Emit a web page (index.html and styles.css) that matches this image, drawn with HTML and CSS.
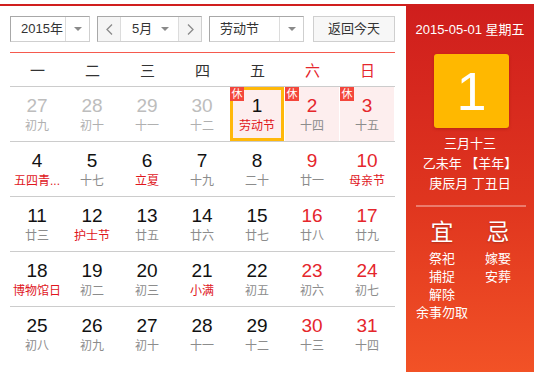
FILE: index.html
```html
<!DOCTYPE html>
<html lang="zh">
<head>
<meta charset="utf-8">
<link rel="stylesheet" href="styles.css">
</head>
<body>
<div class="wrap">
  <div class="cal">
    <div class="controls">
      <div class="sel sel-year"><span class="sel-text">2015年</span><span class="sel-arrow"><i class="tri"></i></span></div>
      <div class="month">
        <span class="nav"><svg width="7" height="11" viewBox="0 0 7 11"><polyline points="6,0.5 1,5.5 6,10.5" fill="none" stroke="#8a8a8a" stroke-width="1.3"/></svg></span>
        <span class="month-mid"><span class="sel-text">5月</span><i class="tri"></i></span>
        <span class="nav"><svg width="7" height="11" viewBox="0 0 7 11"><polyline points="1,0.5 6,5.5 1,10.5" fill="none" stroke="#8a8a8a" stroke-width="1.3"/></svg></span>
      </div>
      <div class="sel sel-hol"><span class="sel-text">劳动节</span><span class="sel-arrow"><i class="tri"></i></span></div>
      <div class="btn">返回今天</div>
    </div>
    <div class="head">
      <span>一</span><span>二</span><span>三</span><span>四</span><span>五</span><span class="we">六</span><span class="we">日</span>
    </div>
    <div class="row">
      <div class="cell other"><b>27</b><em>初九</em></div>
      <div class="cell other"><b>28</b><em>初十</em></div>
      <div class="cell other"><b>29</b><em>十一</em></div>
      <div class="cell other"><b>30</b><em>十二</em></div>
      <div class="cell rest today"><i class="badge">休</i><b>1</b><em class="fest">劳动节</em></div>
      <div class="cell rest wkend"><i class="badge">休</i><b>2</b><em>十四</em></div>
      <div class="cell rest wkend"><i class="badge">休</i><b>3</b><em>十五</em></div>
    </div>
    <div class="row">
      <div class="cell"><b>4</b><em class="fest">五四青...</em></div>
      <div class="cell"><b>5</b><em>十七</em></div>
      <div class="cell"><b>6</b><em class="fest">立夏</em></div>
      <div class="cell"><b>7</b><em>十九</em></div>
      <div class="cell"><b>8</b><em>二十</em></div>
      <div class="cell wkend"><b>9</b><em>廿一</em></div>
      <div class="cell wkend"><b>10</b><em class="fest">母亲节</em></div>
    </div>
    <div class="row">
      <div class="cell"><b>11</b><em>廿三</em></div>
      <div class="cell"><b>12</b><em class="fest">护士节</em></div>
      <div class="cell"><b>13</b><em>廿五</em></div>
      <div class="cell"><b>14</b><em>廿六</em></div>
      <div class="cell"><b>15</b><em>廿七</em></div>
      <div class="cell wkend"><b>16</b><em>廿八</em></div>
      <div class="cell wkend"><b>17</b><em>廿九</em></div>
    </div>
    <div class="row">
      <div class="cell"><b>18</b><em class="fest">博物馆日</em></div>
      <div class="cell"><b>19</b><em>初二</em></div>
      <div class="cell"><b>20</b><em>初三</em></div>
      <div class="cell"><b>21</b><em class="fest">小满</em></div>
      <div class="cell"><b>22</b><em>初五</em></div>
      <div class="cell wkend"><b>23</b><em>初六</em></div>
      <div class="cell wkend"><b>24</b><em>初七</em></div>
    </div>
    <div class="row last">
      <div class="cell"><b>25</b><em>初八</em></div>
      <div class="cell"><b>26</b><em>初九</em></div>
      <div class="cell"><b>27</b><em>初十</em></div>
      <div class="cell"><b>28</b><em>十一</em></div>
      <div class="cell"><b>29</b><em>十二</em></div>
      <div class="cell wkend"><b>30</b><em>十三</em></div>
      <div class="cell wkend"><b>31</b><em>十四</em></div>
    </div>
  </div>
  <div class="panel">
    <div class="p-date">2015-05-01 星期五</div>
    <div class="p-day">1</div>
    <div class="p-lunar">
      <div>三月十三</div>
      <div>乙未年 【羊年】</div>
      <div>庚辰月 丁丑日</div>
    </div>
    <div class="p-sep"></div>
    <div class="yiji">
      <div class="yj-col">
        <div class="yj-h">宜</div>
        <div>祭祀</div><div>捕捉</div><div>解除</div><div>余事勿取</div>
      </div>
      <div class="yj-col">
        <div class="yj-h">忌</div>
        <div>嫁娶</div><div>安葬</div>
      </div>
    </div>
  </div>
</div>
</body>
</html>
```

FILE: styles.css
```css
* { box-sizing: border-box; }
html, body { margin: 0; padding: 0; background: #fff; }
body {
  font-family: "Liberation Sans", "Noto Sans CJK SC", sans-serif;
  color: #333;
  width: 534px;
  height: 372px;
  overflow: hidden;
}
.wrap {
  display: flex;
  margin-top: 4px;
  height: 368px;
}
.cal {
  width: 406px;
  border-top: 2px solid #d01f1e;
  padding: 10px 11px 0 10px;
}
.controls {
  display: flex;
  align-items: center;
  height: 26px;
  margin-bottom: 10px;
  font-size: 13px;
}
.sel, .month {
  display: flex;
  height: 26px;
  border: 1px solid #cfcfcf;
  border-top-color: #a8a8a8;
  border-left-color: #a8a8a8;
  background: #fff;
}
.sel-year { width: 80px; }
.sel-hol { width: 95px; margin-left: 7px; }
.month { width: 105px; margin-left: 7px; }
.sel-text { line-height: 24px; color: #333; }
.sel .sel-text { flex: 1; padding-left: 10px; }
.sel-arrow {
  width: 24px;
  border-left: 1px solid #dcdcdc;
  display: flex;
  align-items: center;
  justify-content: center;
}
.tri {
  display: block;
  width: 0; height: 0;
  border-left: 4px solid transparent;
  border-right: 4px solid transparent;
  border-top: 4px solid #8a8a8a;
}
.nav {
  width: 22px;
  background: #f5f5f5;
  display: flex;
  align-items: center;
  justify-content: center;
}
.month-mid {
  flex: 1;
  display: flex;
  align-items: center;
  justify-content: space-between;
  padding: 0 9px 0 11px;
  border-left: 1px solid #dcdcdc;
  border-right: 1px solid #dcdcdc;
}
.btn {
  margin-left: 9px;
  width: 82px;
  height: 26px;
  border: 1px solid #cfcfcf;
  background: #f7f7f7;
  text-align: center;
  line-height: 24px;
  color: #333;
}
.head {
  display: grid;
  grid-template-columns: repeat(7, 55px);
  border-top: 1px solid #f55a4e;
  border-bottom: 1px solid #cccccc;
  height: 35px;
  align-items: center;
  font-size: 15px;
  color: #333;
}
.head span { text-align: center; }
.head .we { color: #e5262c; }
.row {
  display: grid;
  grid-template-columns: repeat(7, 54px);
  column-gap: 1px;
  border-bottom: 1px solid #cccccc;
  height: 55px;
}
.row.last { border-bottom: none; }
.cell {
  position: relative;
  height: 54px;
  padding-top: 9px;
  text-align: center;
}
.cell b {
  display: block;
  font-weight: normal;
  font-size: 19px;
  line-height: 20px;
  color: #111;
}
.cell em {
  display: block;
  font-style: normal;
  font-size: 12px;
  line-height: 16px;
  margin-top: 2px;
  color: #8c8c8c;
  white-space: nowrap;
}
.cell.wkend b { color: #e5262c; }
.cell em.fest { color: #e0161d; }
.cell.other b { color: #bdbdbd; }
.cell.other em { color: #b0b0b0; }
.cell.rest { background: #fdeeee; }
.cell.today {
  border: 3px solid #ffb80a;
  padding-top: 6px;
}
.cell.today b { color: #111; }
.badge {
  position: absolute;
  left: 0;
  top: 0;
  width: 14px;
  height: 14px;
  background: #f4463b;
  color: #fff;
  font-style: normal;
  font-size: 11px;
  line-height: 14px;
  text-align: center;
}
.cell.today .badge { left: -3px; top: -3px; }
.panel {
  flex: 1;
  background: linear-gradient(to bottom, #cf1e1d 0%, #e0361f 55%, #f25226 100%);
  color: #fff;
  display: flex;
  flex-direction: column;
  align-items: center;
  padding-top: 17px;
}
.p-date { font-size: 13px; line-height: 18px; }
.p-day {
  margin-top: 15px;
  width: 75px;
  height: 74px;
  background: #ffb800;
  border-radius: 3px;
  box-shadow: 0 1px 3px rgba(120, 20, 0, 0.35);
  font-size: 54px;
  line-height: 74px;
  text-align: center;
  color: #fff;
  margin-left: 3px;
}
.p-lunar {
  margin-top: 6px;
  font-size: 13px;
  line-height: 20px;
  text-align: center;
}
.p-sep {
  margin-top: 11px;
  width: 110px;
  height: 2px;
  background: rgba(255, 255, 255, 0.35);
  margin-left: 2px;
}
.yiji {
  display: flex;
  margin-top: 11px;
  font-size: 13px;
  line-height: 18px;
}
.yj-col {
  width: 56px;
  text-align: center;
  white-space: nowrap;
}
.yj-h {
  font-size: 23px;
  line-height: 28px;
  margin-bottom: 4px;
  text-shadow: 0 1px 2px rgba(0, 0, 0, 0.25);
}
```
